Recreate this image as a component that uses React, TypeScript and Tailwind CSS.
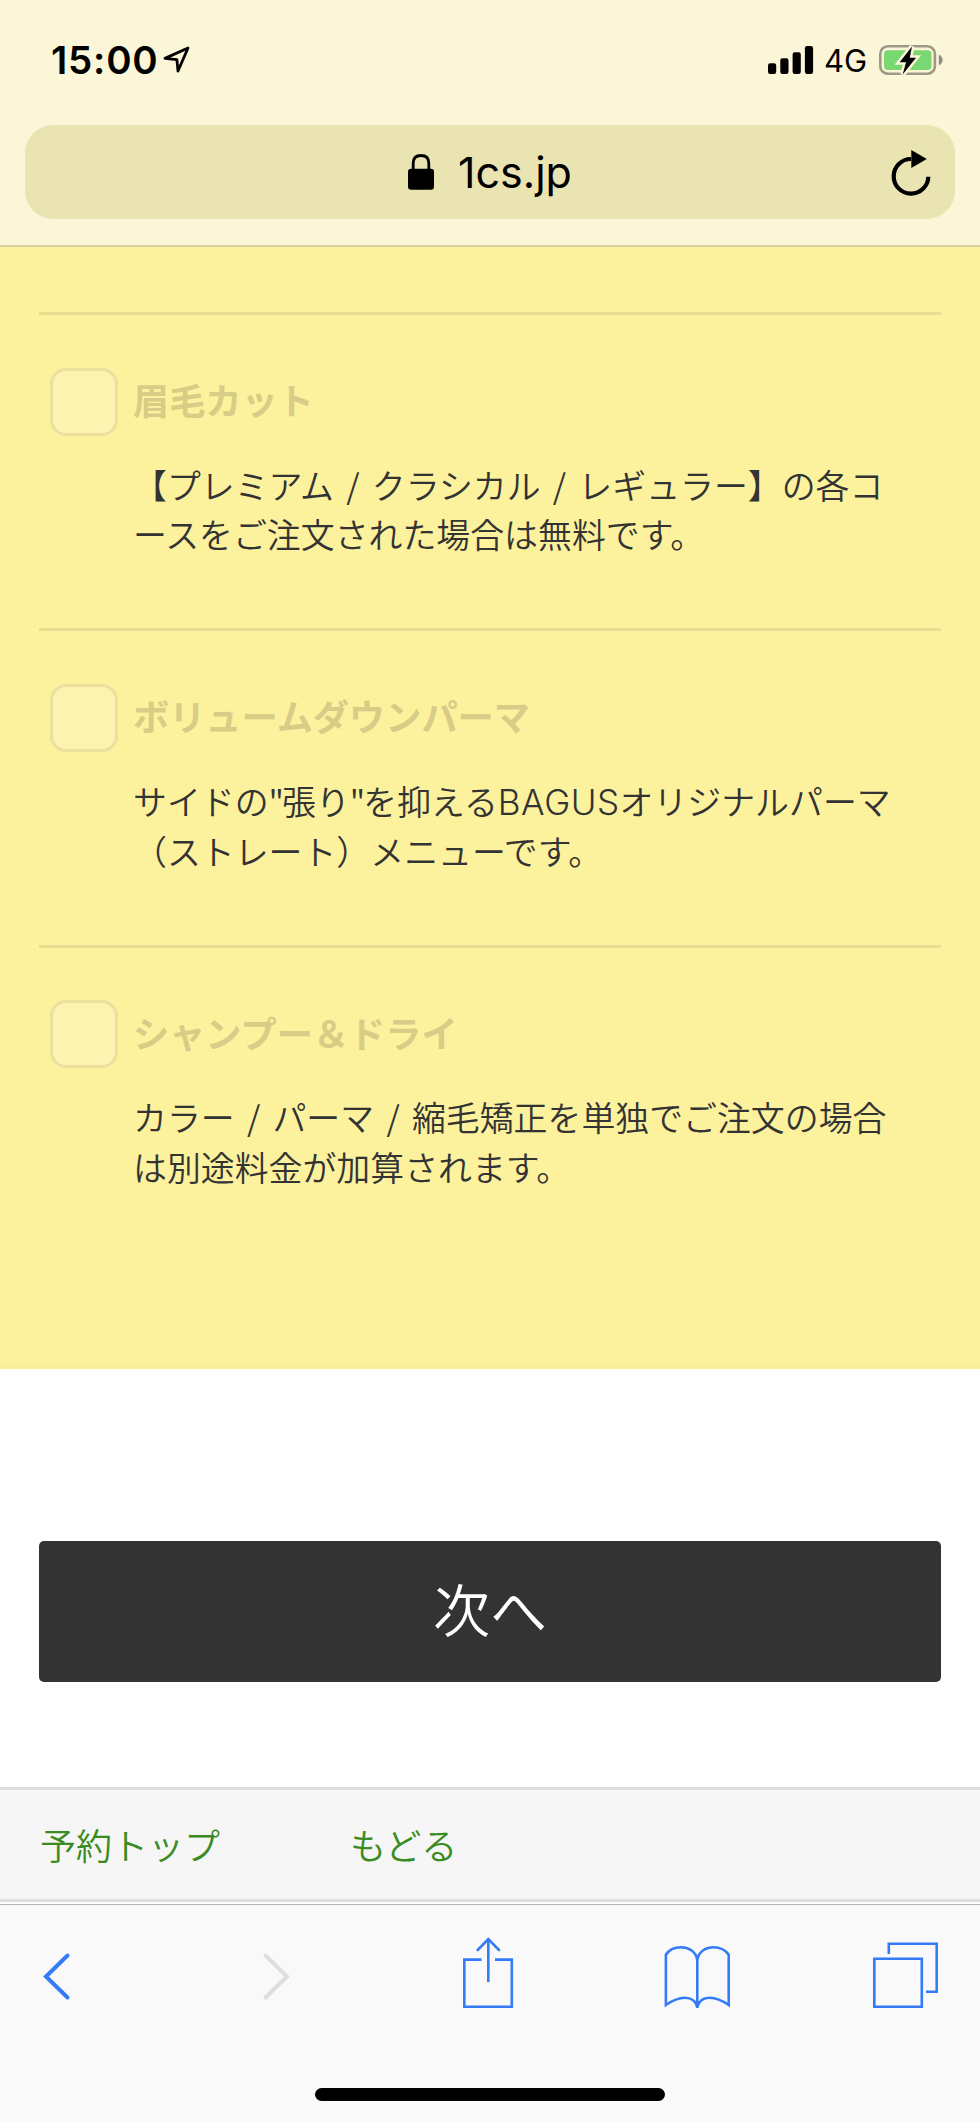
import type { ReactNode } from "react";

interface MenuOption {
  name: string;
  lines: string[];
}

const OPTIONS: MenuOption[] = [
  {
    name: "眉毛カット",
    lines: ["【プレミアム / クラシカル / レギュラー】の各コ", "ースをご注文された場合は無料です。"],
  },
  {
    name: "ボリュームダウンパーマ",
    lines: ['サイドの"張り"を抑えるBAGUSオリジナルパーマ', "（ストレート）メニューです。"],
  },
  {
    name: "シャンプー＆ドライ",
    lines: ["カラー / パーマ / 縮毛矯正を単独でご注文の場合", "は別途料金が加算されます。"],
  },
];

function StatusBar() {
  return (
    <div className="flex h-[125px] items-start justify-between pl-[51px] pr-[37px] pt-[42px]">
      <div className="flex h-9 items-center gap-1">
        <span className="w-[108px] whitespace-nowrap text-[38.5px] font-semibold leading-9 tracking-[0.8px]">15:00</span>
        <svg width="28" height="28" viewBox="0 0 28 28" fill="none" stroke="#000" strokeWidth="2.8" strokeLinejoin="round">
          <path d="M25 2 L2 12.4 L13.9 13.6 L15 25 Z" />
        </svg>
      </div>
      <div className="flex h-9 items-center">
        <svg width="46" height="28" viewBox="0 0 46 28">
          <rect x="0" y="17.3" width="8.2" height="10.7" rx="2.2" />
          <rect x="12.3" y="12.3" width="8.2" height="15.7" rx="2.2" />
          <rect x="24.6" y="6.2" width="8.2" height="21.8" rx="2.2" />
          <rect x="36.9" y="0" width="8.2" height="28" rx="2.2" />
        </svg>
        <span className="ml-[10px] mt-0.5 w-[43px] whitespace-nowrap text-[31px] leading-9">4G</span>
        <svg className="ml-[12px]" width="64" height="34" viewBox="0 0 64 34">
          <rect x="1.3" y="3.3" width="54.6" height="27.4" rx="7.5" fill="none" stroke="#9d9985" strokeWidth="2.6" />
          <path d="M59.8 11.5 Q63.6 14 63.6 17 Q63.6 20 59.8 22.5 Z" fill="#8e8b7c" />
          <rect x="5" y="7.2" width="47.5" height="19.8" rx="4" fill="#79d871" />
          <path
            d="M33 3.5 L20.6 19.3 H27 L23.7 31.5 L37 14.7 H30.8 Z"
            fill="#000"
            stroke="#fcf6d9"
            strokeWidth="5"
            paintOrder="stroke"
          />
        </svg>
      </div>
    </div>
  );
}

function AddressBar() {
  return (
    <div className="mx-[25px] flex h-[94px] items-center rounded-[28px] bg-[#eae4b3] pr-[22px]">
      <div className="flex flex-1 items-center pl-[382px]">
        <svg width="28" height="36" viewBox="0 0 28 36">
          <path d="M6.2 16 V9.3 Q6.2 1.5 14 1.5 Q21.8 1.5 21.8 9.3 V16" fill="none" stroke="#000" strokeWidth="2.8" />
          <rect x="1" y="14.7" width="26" height="21" rx="3" />
        </svg>
        <span className="ml-[23px] text-[43px] leading-none">1cs.jp</span>
      </div>
      <svg width="42" height="48" viewBox="0 0 42 48">
        <path d="M37.3 28.7 A17.3 17.3 0 1 1 20 11" fill="none" stroke="#000" strokeWidth="4.2" />
        <path d="M20.3 2 L35.8 10.9 L20.3 20 Z" />
      </svg>
    </div>
  );
}

// Latin words and straight quotes get their own metrics inside the Japanese text
function renderLine(line: string) {
  return line.split(/([A-Z]+|")/).map((part, i) => {
    if (/^[A-Z]+$/.test(part)) {
      return (
        <span key={i} className="font-['Inter'] text-[35px] leading-none tracking-[0.5px]">
          {part}
        </span>
      );
    }
    if (part === '"') {
      return (
        <span key={i} className="tracking-[-2px]">
          {part}
        </span>
      );
    }
    return part;
  });
}

function OptionRow({ name, lines }: MenuOption) {
  return (
    <li className="h-[316.3px] border-t-3 border-[#e8de91] pt-[52.4px]">
      <div className="flex items-center pl-[11px]">
        <span className="size-[68px] rounded-[16px] border-3 border-[#ebe19f] bg-[#fdf3b1]" />
        <span className="-mt-[5px] ml-[15px] text-[36.2px] font-bold leading-[68px] text-[#d7cd86]">{name}</span>
      </div>
      <p className="mt-[24px] pl-[94px] text-[33.9px] font-[350] leading-[49.7px] text-[#333] [word-spacing:4.7px]">
        {lines.map((line) => (
          <span key={line} className="block whitespace-nowrap">
            {renderLine(line)}
          </span>
        ))}
      </p>
    </li>
  );
}

function ToolbarIcon({ className = "", width, children }: { className?: string; width: number; children: ReactNode }) {
  return (
    <svg
      className={className}
      width={width}
      height="76"
      viewBox={`0 0 ${width} 76`}
      fill="none"
      stroke="#347cf6"
      strokeWidth="2.6"
    >
      {children}
    </svg>
  );
}

function Toolbar() {
  return (
    <div className="h-[218px] border-t border-[#b4b4b4] bg-[#f9f9f9] pt-[27px]">
      <div className="flex pl-[42px]">
        <ToolbarIcon width={30}>
          <path d="M25.5 23.5 L4 44.5 L25.5 65.5" strokeWidth="4" strokeLinecap="round" />
        </ToolbarIcon>
        <ToolbarIcon width={30} className="ml-[189px]">
          <path d="M4.5 23.5 L26 44.5 L4.5 65.5" stroke="#dedede" strokeWidth="4" strokeLinecap="round" />
        </ToolbarIcon>
        <ToolbarIcon width={54} className="ml-[170px]">
          <path d="M20.5 27.6 H3.3 V74.7 H50.8 V27.6 H34" />
          <path d="M27.3 50 V7.5" />
          <path d="M16.7 18 L27.3 7 L38 18" strokeLinecap="round" />
        </ToolbarIcon>
        <ToolbarIcon width={70} className="ml-[147px]">
          <path d="M35.3 76 V28 C34 19 26 15.2 19 15.2 C12 15.2 6.5 18.5 3.9 22.7 V73 C13 66.5 19 65.7 23 65.7 C29 65.7 34 69 35.3 75.5 C36.6 69 41 65.7 47.5 65.7 C52 65.7 58 66.8 66.7 73 V22.7 C64 18.5 58 15.2 51.5 15.2 C44.5 15.2 36.6 19 35.3 28" />
        </ToolbarIcon>
        <ToolbarIcon width={68} className="ml-[139px]">
          <path d="M3.3 26.7 H50.8 V74.7 H3.3 Z" />
          <path d="M17.8 22 V11.8 H65.7 V59.7 H55" />
        </ToolbarIcon>
      </div>
      <div className="mx-auto mt-[80px] h-[13px] w-[350px] rounded-full bg-black" />
    </div>
  );
}

export default function App() {
  return (
    <div className="flex h-[2122px] w-[980px] flex-col overflow-hidden bg-white font-['Inter','Noto_Sans_CJK_JP',sans-serif] text-black">
      <header className="h-[247px] shrink-0 border-b-2 border-[#d5ce9d] bg-[#fcf6d9]">
        <StatusBar />
        <AddressBar />
      </header>

      <main className="flex-1 font-['Noto_Sans_CJK_JP',sans-serif]">
        <ul className="h-[1121.5px] bg-[#fcf19d] bg-linear-to-b from-[#fcf19d] from-[99.2%] to-[#f9ec98] px-[39px] pt-[65.2px]">
          {OPTIONS.map((option) => (
            <OptionRow key={option.name} {...option} />
          ))}
        </ul>
        <div className="px-[39px] pt-[172.5px]">
          <button className="block h-[141px] w-full rounded-[5px] bg-[#333] pb-[8px] text-[57px] font-[350] leading-none text-white">
            次へ
          </button>
        </div>
      </main>

      <nav className="mb-[2px] flex h-[115px] shrink-0 items-center border-y-3 border-[#dedede] bg-[#f6f6f6] pb-[2px] pl-[40px] font-['Noto_Sans_CJK_JP',sans-serif] text-[36px] font-[350] leading-none text-[#3a8c22]">
        <a className="w-[310px]">予約トップ</a>
        <a>もどる</a>
      </nav>
      <Toolbar />
    </div>
  );
}
